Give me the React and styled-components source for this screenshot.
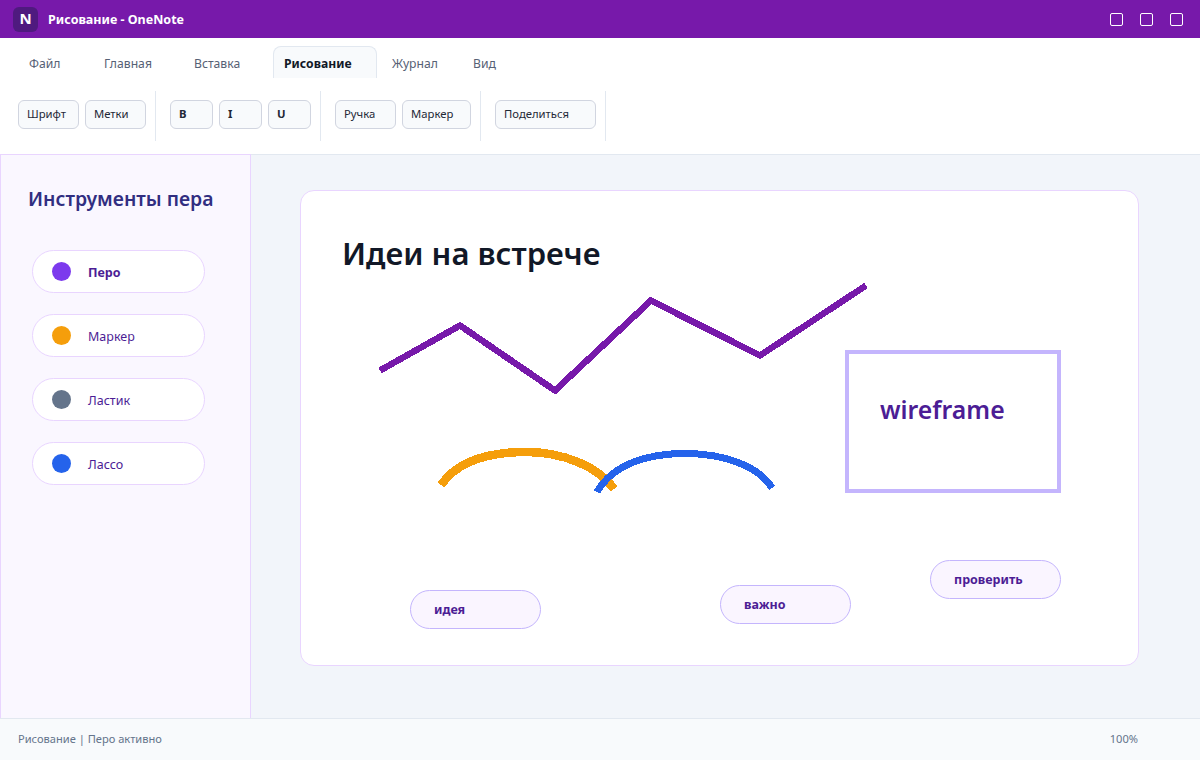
import React from "react";
import styled, { createGlobalStyle } from "styled-components";

const GlobalStyle = createGlobalStyle`
  html, body {
    margin: 0;
    height: 100%;
    font-family: "Noto Sans", "Open Sans", sans-serif;
  }
  * {
    box-sizing: border-box;
  }
`;

const Page = styled.div`
  width: 1200px;
  height: 760px;
  display: flex;
  flex-direction: column;
  overflow: hidden;
  background: #fff;
`;

const TitleBar = styled.div`
  height: 38px;
  flex: none;
  display: flex;
  align-items: center;
  padding: 0 17px 0 13px;
  background: #7719aa;
  color: #fff;
`;

const Logo = styled.div`
  width: 25px;
  height: 25px;
  margin-right: 10px;
  padding-bottom: 2px;
  border-radius: 6px;
  background: #4f1a7f;
  display: flex;
  align-items: center;
  justify-content: center;
  font-size: 15px;
  font-weight: 700;
`;

const AppTitle = styled.div`
  font-size: 12.5px;
  font-weight: 700;
  flex: 1;
`;

const WinButtons = styled.div`
  display: flex;
  gap: 17px;
`;

const WinButton = styled.div`
  width: 13px;
  height: 13px;
  border: 1px solid #fff;
  border-radius: 2px;
`;

const Ribbon = styled.div`
  height: 117px;
  flex: none;
  background: #fff;
  border-bottom: 1px solid #e2e8f0;
  padding: 8px 18px 0;
`;

const Tabs = styled.div`
  display: flex;
  height: 32px;
`;

const Tab = styled.div`
  width: ${(p) => p.$width}px;
  margin-right: ${(p) => (p.$active ? 4 : 0)}px;
  padding: 2px 11px 0 ${(p) => (p.$active ? 10 : 11)}px;
  display: flex;
  align-items: center;
  font-size: 12.2px;
  font-weight: ${(p) => (p.$active ? 700 : 400)};
  color: ${(p) => (p.$active ? "#111827" : "#566175")};
  background: ${(p) => (p.$active ? "#f8fafc" : "transparent")};
  border: ${(p) => (p.$active ? "1px solid #e2e8f0" : "none")};
  border-bottom: none;
  border-radius: 8px 8px 0 0;
`;

const Tools = styled.div`
  display: flex;
  margin-top: 13px;
`;

const ToolGroup = styled.div`
  height: 50px;
  display: flex;
  align-items: flex-start;
  gap: 6px;
  padding: 9px 9px 0 0;
  margin-right: 14px;
  border-right: 1px solid #e2e8f0;
`;

const ToolButton = styled.div`
  width: ${(p) => p.$width}px;
  height: 29px;
  padding: 0 0 2px 8px;
  display: flex;
  align-items: center;
  font-size: 11.3px;
  font-weight: ${(p) => (p.$bold ? 700 : 400)};
  color: #1f2937;
  background: #f8fafc;
  border: 1px solid #d1d5e0;
  border-radius: 6px;
`;

const Body = styled.div`
  flex: 1;
  display: flex;
  min-height: 0;
`;

const Sidebar = styled.div`
  width: 251px;
  flex: none;
  margin-top: -1px;
  padding: 31px 0 0 27px;
  background: #faf7ff;
  border: 1px solid #e9d5ff;
  border-bottom: none;
`;

const SidebarTitle = styled.h2`
  margin: 0 0 38px;
  font-size: 19.4px;
  line-height: 26px;
  font-weight: 600;
  color: #312e81;
`;

const PenList = styled.div`
  display: flex;
  flex-direction: column;
  gap: 21px;
  margin-left: 4px;
`;

const PenRow = styled.div`
  width: 173px;
  height: 43px;
  padding-left: 19px;
  display: flex;
  align-items: center;
  background: #fff;
  border: 1px solid #e9d5ff;
  border-radius: 22px;
`;

const PenDot = styled.span`
  width: 19px;
  height: 19px;
  margin-right: 17px;
  border-radius: 50%;
  background: ${(p) => p.$color};
`;

const PenName = styled.span`
  padding-top: 2px;
  font-size: 12.5px;
  font-weight: ${(p) => (p.$active ? 700 : 400)};
  color: #4c1d95;
`;

const Workspace = styled.div`
  flex: 1;
  padding: 35px 61px 52px 49px;
  background: #f2f5fa;
`;

const Sheet = styled.div`
  position: relative;
  width: 839px;
  height: 476px;
  background: #fff;
  border: 1px solid #e9d5ff;
  border-radius: 14px;
`;

const SheetTitle = styled.h1`
  position: absolute;
  left: 41px;
  top: 40px;
  margin: 0;
  font-size: 31px;
  line-height: 44px;
  font-weight: 600;
  color: #111827;
`;

const Ink = styled.svg`
  position: absolute;
  left: -1px;
  top: -1px;
`;

const Wireframe = styled.div`
  position: absolute;
  left: 544px;
  top: 159px;
  width: 216px;
  height: 143px;
  padding: 37px 0 0 31px;
  border: 4px solid #c4b5fd;
  font-size: 24.8px;
  line-height: 36px;
  font-weight: 600;
  color: #4c1d95;
`;

const Chip = styled.div`
  position: absolute;
  left: ${(p) => p.$x}px;
  top: ${(p) => p.$y}px;
  width: 131px;
  height: 39px;
  padding-left: 23px;
  display: flex;
  align-items: center;
  font-size: 12.5px;
  font-weight: 700;
  color: #4c1d95;
  background: #faf5ff;
  border: 1px solid #c4b5fd;
  border-radius: 20px;
`;

const StatusBar = styled.div`
  height: 42px;
  flex: none;
  display: flex;
  align-items: center;
  justify-content: space-between;
  padding: 0 62px 2px 18px;
  background: #f8fafc;
  border-top: 1px solid #e2e8f0;
  font-size: 11.1px;
  color: #64748b;
`;

const tabs = [
  { label: "Файл", width: 75 },
  { label: "Главная", width: 90 },
  { label: "Вставка", width: 90 },
  { label: "Рисование", width: 104, active: true },
  { label: "Журнал", width: 81 },
  { label: "Вид", width: 60 },
];

const toolGroups = [
  [
    { label: "Шрифт", width: 61 },
    { label: "Метки", width: 61 },
  ],
  [
    { label: "B", width: 43, bold: true },
    { label: "I", width: 43, bold: true },
    { label: "U", width: 43, bold: true },
  ],
  [
    { label: "Ручка", width: 61 },
    { label: "Маркер", width: 69 },
  ],
  [{ label: "Поделиться", width: 101 }],
];

const pens = [
  { label: "Перо", color: "#7c3aed", active: true },
  { label: "Маркер", color: "#f59e0b" },
  { label: "Ластик", color: "#64748b" },
  { label: "Лассо", color: "#2563eb" },
];

const chips = [
  { label: "идея", x: 109, y: 399 },
  { label: "важно", x: 419, y: 394 },
  { label: "проверить", x: 629, y: 369 },
];

export default function App() {
  return (
    <Page>
      <GlobalStyle />
      <TitleBar>
        <Logo>N</Logo>
        <AppTitle>Рисование - OneNote</AppTitle>
        <WinButtons>
          <WinButton />
          <WinButton />
          <WinButton />
        </WinButtons>
      </TitleBar>
      <Ribbon>
        <Tabs>
          {tabs.map((t) => (
            <Tab key={t.label} $width={t.width} $active={t.active}>
              {t.label}
            </Tab>
          ))}
        </Tabs>
        <Tools>
          {toolGroups.map((group, i) => (
            <ToolGroup key={i}>
              {group.map((b) => (
                <ToolButton key={b.label} $width={b.width} $bold={b.bold}>
                  {b.label}
                </ToolButton>
              ))}
            </ToolGroup>
          ))}
        </Tools>
      </Ribbon>
      <Body>
        <Sidebar>
          <SidebarTitle>Инструменты пера</SidebarTitle>
          <PenList>
            {pens.map((p) => (
              <PenRow key={p.label}>
                <PenDot $color={p.color} />
                <PenName $active={p.active}>{p.label}</PenName>
              </PenRow>
            ))}
          </PenList>
        </Sidebar>
        <Workspace>
          <Sheet>
            <SheetTitle>Идеи на встрече</SheetTitle>
            <Ink width="839" height="476" viewBox="300 190 839 476" fill="none" shapeRendering="crispEdges">
              <polyline
                points="380,370.5 460,325.5 555,390.5 651,300.5 760,355.5 866,285.5"
                stroke="#7719aa"
                strokeWidth="6.5"
              />
              <path d="M441 485 C459 459 492 452 526 452 C562 452 598 466 614 489" stroke="#f59e0b" strokeWidth="8.5" />
              <path d="M597 492 C613 464 648 453.5 685 453.5 C722 453.5 758 465 772 488" stroke="#2563eb" strokeWidth="7" />
            </Ink>
            <Wireframe>wireframe</Wireframe>
            {chips.map((c) => (
              <Chip key={c.label} $x={c.x} $y={c.y}>
                {c.label}
              </Chip>
            ))}
          </Sheet>
        </Workspace>
      </Body>
      <StatusBar>
        <span>Рисование | Перо активно</span>
        <span>100%</span>
      </StatusBar>
    </Page>
  );
}
